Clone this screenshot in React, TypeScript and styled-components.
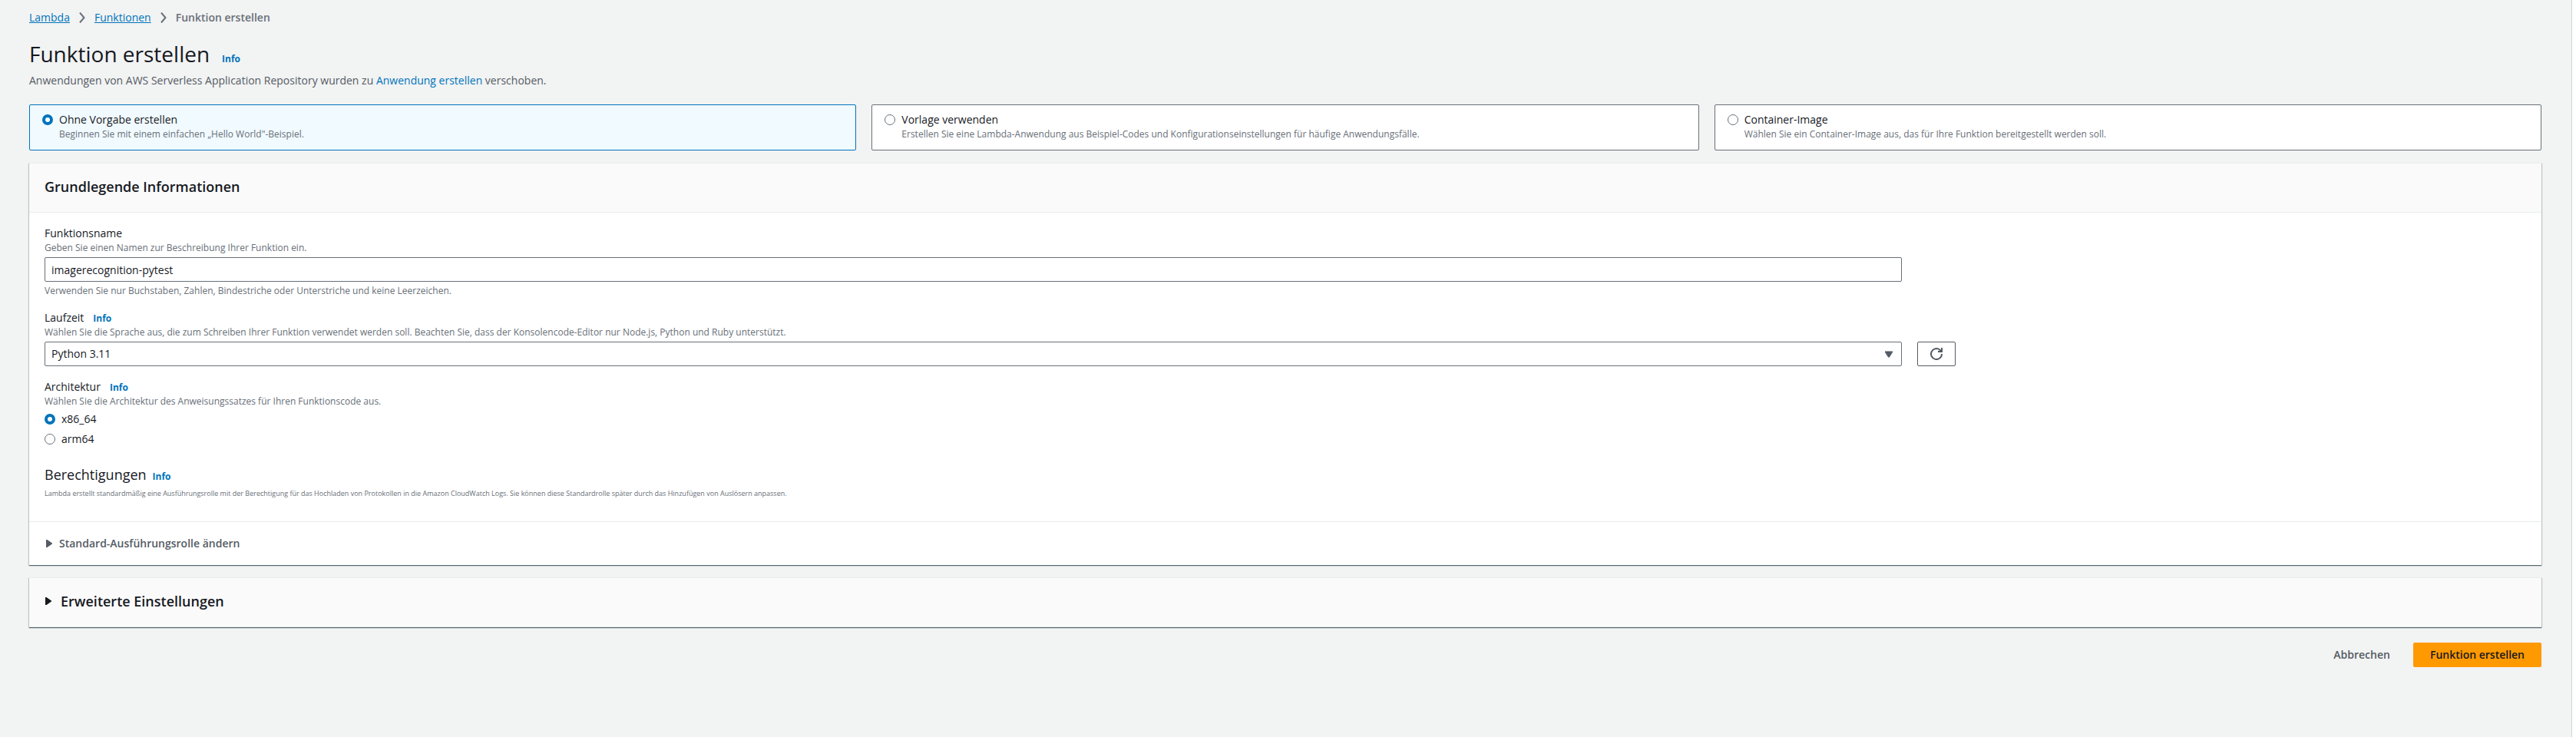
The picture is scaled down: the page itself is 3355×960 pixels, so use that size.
import React from 'react';
import styled, { createGlobalStyle } from 'styled-components';

const GlobalStyle = createGlobalStyle`
  *, *::before, *::after { box-sizing: border-box; }
  html { height: 100%; background: #ffffff; }
  body { margin: 0; min-height: 100%; color: #16191f; font: 14px/22px "Open Sans", "Noto Sans", sans-serif; }
  button, input, select { font: inherit; color: inherit; margin: 0; }
`;

const Page = styled.main`
  min-height: 100vh;
  margin-right: 5px;
  padding: 12px 39px 40px 38px;
  border-right: 1px solid #d0d4d5;
  background: #f2f3f3;
`;

const Breadcrumbs = styled.ol`
  display: flex;
  align-items: center;
  gap: 12px;
  margin: 0;
  padding: 0;
  list-style: none;
`;

const Crumb = styled.li<{ $current?: boolean }>`
  display: flex;
  align-items: center;
  gap: 12px;
  color: #687078;
  font-weight: ${(p) => (p.$current ? 600 : 400)};
`;

const Link = styled.a<{ $underlined?: boolean }>`
  color: #0073bb;
  text-decoration: ${(p) => (p.$underlined ? 'underline' : 'none')};
`;

const InfoLink = styled.a`
  color: #0073bb;
  font-size: 12px;
  font-weight: 700;
  text-decoration: none;
`;

const TitleRow = styled.div`
  display: flex;
  align-items: baseline;
  gap: 16px;
  margin-top: 18px;
`;

const Title = styled.h1`
  margin: 0;
  font-size: 28px;
  line-height: 36px;
  font-weight: 400;
`;

const Intro = styled.p`
  margin: 6px 0 20px;
  color: #545b64;
`;

const Tiles = styled.div`
  display: grid;
  grid-template-columns: repeat(3, 1fr);
  gap: 20px;
  margin-bottom: 16px;
`;

const Tile = styled.label<{ $selected?: boolean }>`
  display: grid;
  grid-template-columns: auto 1fr;
  column-gap: 8px;
  align-items: center;
  padding: 8px 16px 12px;
  border: 1px solid ${(p) => (p.$selected ? '#0073bb' : '#687078')};
  border-radius: 2px;
  background: ${(p) => (p.$selected ? '#f1faff' : '#ffffff')};
`;

const TileHint = styled.span`
  grid-column: 2;
  color: #687078;
  font-size: 12px;
  line-height: 16px;
`;

const Radio = styled.input.attrs({ type: 'radio' })`
  appearance: none;
  width: 14px;
  height: 14px;
  border: 1px solid #687078;
  border-radius: 50%;
  background: #ffffff;
  &:checked { border: 4px solid #0073bb; }
`;

const Panel = styled.section`
  margin-bottom: 16px;
  border-top: 1px solid #eaeded;
  background: #ffffff;
  box-shadow: 0 1px 1px 0 rgba(0, 28, 36, 0.5), 1px 1px 1px 0 rgba(0, 28, 36, 0.15),
    -1px 1px 1px 0 rgba(0, 28, 36, 0.15);
`;

const PanelHeader = styled.header`
  padding: 19px 20px 22px;
  border-bottom: 1px solid #eaeded;
  background: #fafafa;
`;

const PanelTitle = styled.h2`
  margin: 0;
  font-size: 18px;
  line-height: 22px;
  font-weight: 600;
`;

const PanelBody = styled.div`
  display: flex;
  flex-direction: column;
  gap: 16px;
  padding: 16px 20px 28px;
`;

const FieldRow = styled.div`
  display: grid;
  grid-template-columns: repeat(12, 1fr);
  column-gap: 20px;
  align-items: end;
`;

const Field = styled.div`
  grid-column: span 9;
  display: flex;
  flex-direction: column;
`;

const LabelRow = styled.div<{ $tight?: boolean }>`
  display: flex;
  align-items: baseline;
  gap: ${(p) => (p.$tight ? '8px' : '12px')};
  height: 22px;
`;

const Hint = styled.p`
  margin: 0;
  color: #687078;
  font-size: 12px;
  line-height: 16px;
`;

const TextInput = styled.input`
  width: 100%;
  height: 32px;
  margin: 4px 0;
  padding: 0 8px;
  border: 1px solid #687078;
  border-radius: 2px;
  background: #ffffff;
`;

const SelectBox = styled.div`
  display: grid;
  align-items: center;
  margin-top: 4px;
  > * { grid-area: 1 / 1; }
  > svg { justify-self: end; margin-right: 12px; pointer-events: none; }
`;

const Select = styled.select`
  appearance: none;
  width: 100%;
  height: 32px;
  padding: 0 32px 0 8px;
  border: 1px solid #687078;
  border-radius: 2px;
  background: #ffffff;
`;

const RefreshButton = styled.button`
  display: flex;
  align-items: center;
  justify-content: center;
  width: 50px;
  height: 32px;
  padding: 0;
  border: 1px solid #545b64;
  border-radius: 2px;
  background: #ffffff;
`;

const Choices = styled.fieldset`
  min-width: 0;
  margin: 0;
  padding: 0;
  border: 0;
`;

const Choice = styled.label`
  display: flex;
  align-items: center;
  gap: 8px;
  margin-top: 4px;
`;

const Permissions = styled.div`
  margin-top: 8px;
`;

const SubTitle = styled.h3`
  margin: 0;
  font-size: 18px;
  line-height: 22px;
  font-weight: 400;
`;

const SmallNote = styled.p`
  margin: 6px 0 0;
  color: #687078;
  font-size: 9px;
  line-height: 16px;
`;

const PanelFooter = styled.div`
  padding: 17px 20px;
  border-top: 1px solid #eaeded;
`;

const Expander = styled.button<{ $large?: boolean }>`
  display: flex;
  align-items: center;
  gap: ${(p) => (p.$large ? '12px' : '9px')};
  padding: 0 0 0 ${(p) => (p.$large ? '1px' : '2px')};
  border: 0;
  background: transparent;
  color: ${(p) => (p.$large ? '#16191f' : '#545b64')};
  font-size: ${(p) => (p.$large ? '18px' : '14px')};
  line-height: 22px;
  font-weight: 600;
`;

const Actions = styled.div`
  display: flex;
  justify-content: flex-end;
  gap: 8px;
  margin-top: 20px;
`;

const Action = styled.button<{ $primary?: boolean }>`
  height: 32px;
  padding: 0 22px;
  border: 0;
  border-radius: 2px;
  background: ${(p) => (p.$primary ? '#ff9900' : 'transparent')};
  color: ${(p) => (p.$primary ? '#16191f' : '#545b64')};
  font-weight: 600;
`;

const Chevron = () => (
  <svg width="8" height="14" viewBox="0 0 8 14" fill="none" stroke="#687078" strokeWidth="2" aria-hidden="true">
    <path d="M1 0.5 6.5 7 1 13.5" />
  </svg>
);

const RightTriangle = () => (
  <svg width="8" height="10" viewBox="0 0 8 10" fill="currentColor" aria-hidden="true">
    <path d="M0 0h1.5L8 4.5v1L1.5 10H0z" />
  </svg>
);

const DownTriangle = () => (
  <svg width="10" height="9" viewBox="0 0 10 9" fill="#545b64" aria-hidden="true">
    <path d="M0 0.5h10v1.2L5.8 8.5H4.2L0 1.7z" />
  </svg>
);

const RefreshIcon = () => (
  <svg width="16" height="16" viewBox="0 0 16 16" fill="none" stroke="#545b64" strokeWidth="2" aria-hidden="true">
    <path d="M15 8a7 7 0 1 1-2.5-5.3L14.5 5" />
    <path d="M15 0v5h-5" />
  </svg>
);

const tiles = [
  { title: 'Ohne Vorgabe erstellen', hint: 'Beginnen Sie mit einem einfachen „Hello World"-Beispiel.' },
  {
    title: 'Vorlage verwenden',
    hint: 'Erstellen Sie eine Lambda-Anwendung aus Beispiel-Codes und Konfigurationseinstellungen für häufige Anwendungsfälle.',
  },
  {
    title: 'Container-Image',
    hint: 'Wählen Sie ein Container-Image aus, das für Ihre Funktion bereitgestellt werden soll.',
  },
];

export default function App() {
  const [tile, setTile] = React.useState(0);
  const [arch, setArch] = React.useState('x86_64');

  return (
    <>
      <GlobalStyle />
      <Page>
        <nav aria-label="Breadcrumb">
          <Breadcrumbs>
            <Crumb><Link href="#lambda" $underlined>Lambda</Link><Chevron /></Crumb>
            <Crumb><Link href="#funktionen" $underlined>Funktionen</Link><Chevron /></Crumb>
            <Crumb $current aria-current="page">Funktion erstellen</Crumb>
          </Breadcrumbs>
        </nav>

        <TitleRow>
          <Title>Funktion erstellen</Title>
          <InfoLink href="#info">Info</InfoLink>
        </TitleRow>
        <Intro>
          Anwendungen von AWS Serverless Application Repository wurden zu{' '}
          <Link href="#anwendung">Anwendung erstellen</Link> verschoben.
        </Intro>

        <Tiles role="radiogroup">
          {tiles.map((t, i) => (
            <Tile key={t.title} $selected={tile === i}>
              <Radio name="vorlage" checked={tile === i} onChange={() => setTile(i)} />
              <span>{t.title}</span>
              <TileHint>{t.hint}</TileHint>
            </Tile>
          ))}
        </Tiles>

        <Panel>
          <PanelHeader>
            <PanelTitle>Grundlegende Informationen</PanelTitle>
          </PanelHeader>
          <PanelBody>
            <FieldRow>
              <Field>
                <label htmlFor="name">Funktionsname</label>
                <Hint>Geben Sie einen Namen zur Beschreibung Ihrer Funktion ein.</Hint>
                <TextInput id="name" type="text" defaultValue="imagerecognition-pytest" />
                <Hint>Verwenden Sie nur Buchstaben, Zahlen, Bindestriche oder Unterstriche und keine Leerzeichen.</Hint>
              </Field>
            </FieldRow>

            <FieldRow>
              <Field>
                <LabelRow>
                  <label htmlFor="runtime">Laufzeit</label>
                  <InfoLink href="#info-laufzeit">Info</InfoLink>
                </LabelRow>
                <Hint>
                  Wählen Sie die Sprache aus, die zum Schreiben Ihrer Funktion verwendet werden soll. Beachten Sie, dass
                  der Konsolencode-Editor nur Node.js, Python und Ruby unterstützt.
                </Hint>
                <SelectBox>
                  <Select id="runtime" defaultValue="Python 3.11">
                    <option>Python 3.11</option>
                  </Select>
                  <DownTriangle />
                </SelectBox>
              </Field>
              <RefreshButton type="button" aria-label="Aktualisieren"><RefreshIcon /></RefreshButton>
            </FieldRow>

            <Choices aria-labelledby="arch-label">
              <LabelRow>
                <span id="arch-label">Architektur</span>
                <InfoLink href="#info-architektur">Info</InfoLink>
              </LabelRow>
              <Hint>Wählen Sie die Architektur des Anweisungssatzes für Ihren Funktionscode aus.</Hint>
              {['x86_64', 'arm64'].map((a) => (
                <Choice key={a}>
                  <Radio name="architektur" checked={arch === a} onChange={() => setArch(a)} />
                  <span>{a}</span>
                </Choice>
              ))}
            </Choices>

            <Permissions>
              <LabelRow $tight>
                <SubTitle>Berechtigungen</SubTitle>
                <InfoLink href="#info-berechtigungen">Info</InfoLink>
              </LabelRow>
              <SmallNote>
                Lambda erstellt standardmäßig eine Ausführungsrolle mit der Berechtigung für das Hochladen von
                Protokollen in die Amazon CloudWatch Logs. Sie können diese Standardrolle später durch das Hinzufügen
                von Auslösern anpassen.
              </SmallNote>
            </Permissions>
          </PanelBody>
          <PanelFooter>
            <Expander type="button" aria-expanded="false"><RightTriangle />Standard-Ausführungsrolle ändern</Expander>
          </PanelFooter>
        </Panel>

        <Panel>
          <PanelHeader>
            <Expander type="button" aria-expanded="false" $large><RightTriangle />Erweiterte Einstellungen</Expander>
          </PanelHeader>
        </Panel>

        <Actions>
          <Action type="button">Abbrechen</Action>
          <Action type="submit" $primary>Funktion erstellen</Action>
        </Actions>
      </Page>
    </>
  );
}
